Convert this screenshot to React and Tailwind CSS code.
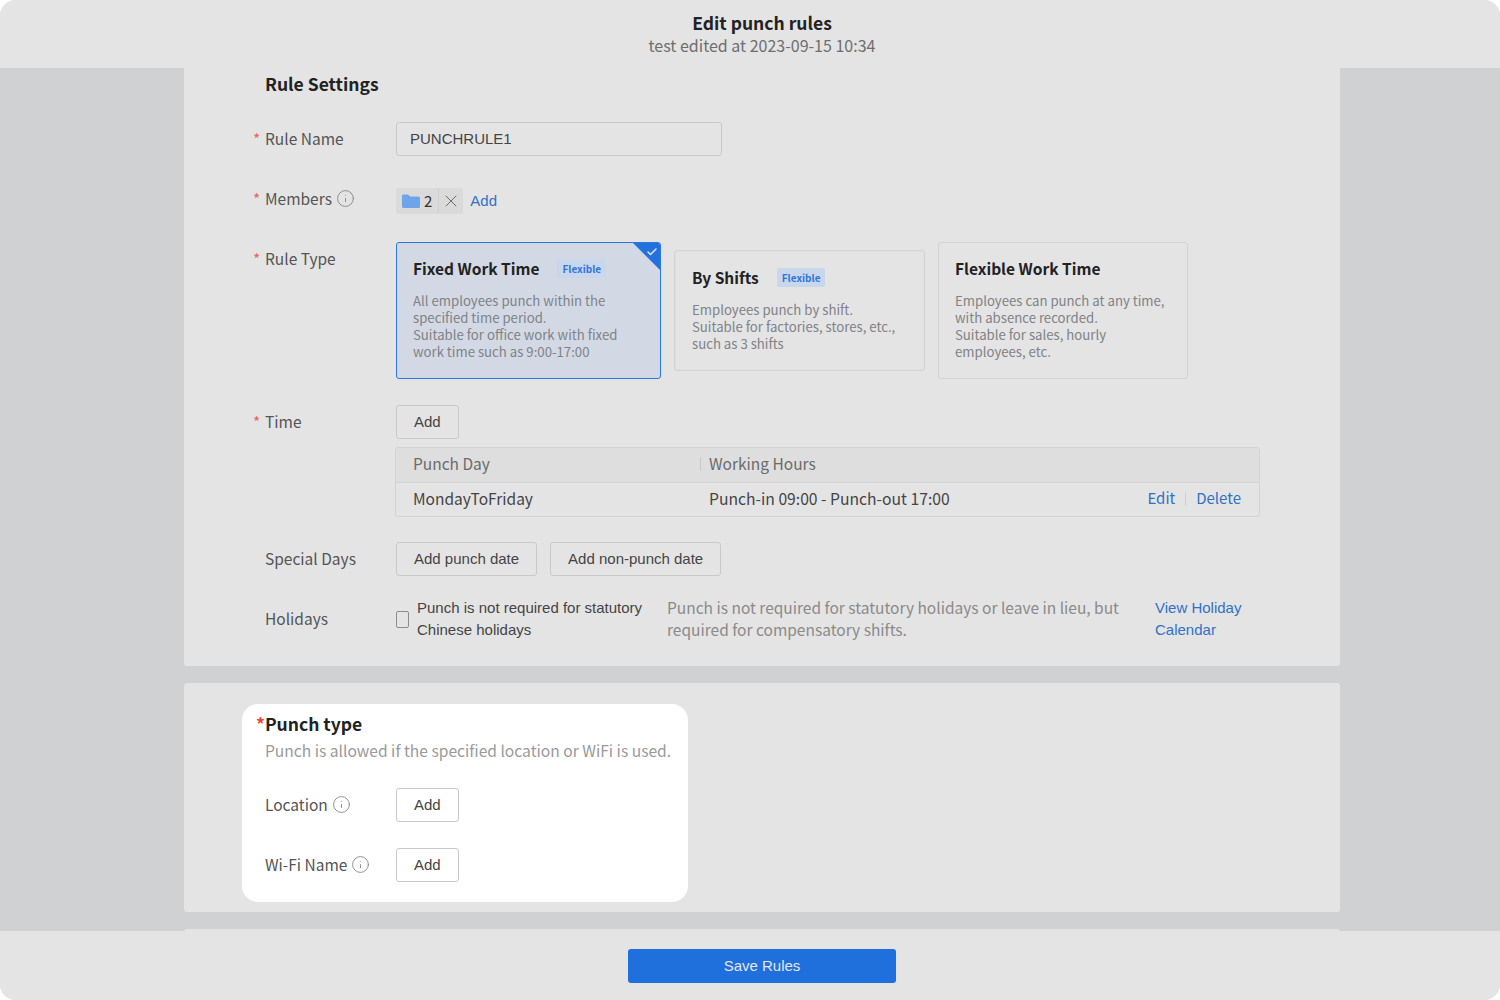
import { Check, Info, X } from "lucide-react";

const UI_FONT = "font-['Noto_Sans_CJK_SC','Noto_Sans',sans-serif]";
const ARIAL = "font-['Liberation_Sans',Arial,sans-serif]";

function Label({ children, required, info }) {
  return (
    <div className="w-[131px] shrink-0 flex items-center text-[15.5px] leading-[20px] text-[#555] -translate-y-[1px]">
      {required && <span className="-ml-[12px] w-[12px] text-[#e2685f]">*</span>}
      <span>{children}</span>
      {info && <Info size={19} strokeWidth={1} className="ml-[4px] text-[#777]" />}
    </div>
  );
}

function Button({ children, className = "" }) {
  return (
    <button className={`h-[34px] px-[17px] border border-[#c9c9c9] rounded-[3px] text-[15px] text-[#444] ${ARIAL} ${className}`}>
      {children}
    </button>
  );
}

function Tag() {
  return (
    <span className="h-[19px] px-[5px] rounded-[2px] bg-[#c8d7ec] text-[#2f76d8] text-[10px] leading-[19px] font-semibold">
      Flexible
    </span>
  );
}

function RuleCard({ title, lines, tag, selected, className }) {
  return (
    <div
      className={`relative overflow-hidden shrink-0 rounded-[3px] border px-[16px] ${
        selected ? "bg-[#d2d9e5] border-[#2a78e0]" : "border-[#d3d3d3]"
      } ${className}`}
    >
      <div className="flex items-center h-[20px]">
        <span className="text-[15.5px] leading-[20px] font-semibold text-[#222]">{title}</span>
        {tag && <span className="flex ml-[18px]"><Tag /></span>}
      </div>
      <div className="mt-[14px] text-[13.2px] leading-[17px] text-[#808286]">
        {lines.map((line) => (
          <div key={line} className="whitespace-nowrap">{line}</div>
        ))}
      </div>
      {selected && (
        <div className="absolute top-0 right-0 w-[27px] h-[27px] bg-[#2272dd] [clip-path:polygon(0_0,100%_0,100%_100%)]">
          <Check size={12} strokeWidth={3} className="absolute top-[3px] right-[2px] text-[#e6e6e6]" />
        </div>
      )}
    </div>
  );
}

export default function App() {
  return (
    <div className="w-[1500px] h-[1000px] bg-white">
      <div className={`w-full h-full flex flex-col overflow-hidden rounded-[16px] bg-[#d0d1d3] ${UI_FONT}`}>
        <header className="h-[68px] shrink-0 bg-[#e4e4e4] flex flex-col items-center pt-[12px] pl-[24px]">
          <div className="text-[17.5px] leading-[22px] font-semibold text-[#222]">Edit punch rules</div>
          <div className="mt-[1px] text-[16px] leading-[21px] text-[#6e6e6e]">test edited at 2023-09-15 10:34</div>
        </header>

        <main className="flex-1 overflow-hidden pl-[184px] pr-[160px] flex flex-col gap-[17px]">
          <section className="h-[598px] shrink-0 bg-[#e4e4e4] rounded-b-[3px] pl-[81px] pt-[4px] flex flex-col">
            <h2 className="text-[17.5px] leading-[24px] font-semibold text-[#222]">Rule Settings</h2>

            <div className="mt-[26px] flex items-center h-[34px]">
              <Label required>Rule Name</Label>
              <div className={`w-[326px] h-[34px] flex items-center px-[13px] border border-[#c9c9c9] rounded-[3px] text-[15px] text-[#444] ${ARIAL}`}>
                PUNCHRULE1
              </div>
            </div>

            <div className="mt-[32px] flex h-[26px]">
              <div className="mt-[1px]"><Label required info>Members</Label></div>
              <div className="flex items-center h-[26px] rounded-[3px] bg-[#dadada] text-[15px] text-[#333]">
                <span className="flex items-center gap-[4px] pl-[6px] pr-[6px] h-full border-r border-[#d0d0d0]">
                  <svg width="18" height="14" viewBox="0 0 18 14">
                    <path d="M0 2a1.500 1.500 0 0 1 1.500-1.500h4.600L8 2.500h8.500A1.500 1.500 0 0 1 18 4v8.500a1.500 1.500 0 0 1-1.500 1.500h-15A1.500 1.500 0 0 1 0 12.500z" fill="#6ea5ea" />
                  </svg>
                  2
                </span>
                <span className="flex items-center justify-center w-[24px]">
                  <X size={20} strokeWidth={1} className="text-[#555]" />
                </span>
              </div>
              <span className={`ml-[7px] text-[15px] leading-[26px] text-[#3271c4] ${ARIAL}`}>Add</span>
            </div>

            <div className="mt-[28px] flex">
              <div className="pt-[7px]"><Label required>Rule Type</Label></div>
              <div className="flex items-center gap-[13px]">
                <RuleCard
                  selected
                  tag
                  className="w-[265px] h-[137px] pt-[15px]"
                  title="Fixed Work Time"
                  lines={["All employees punch within the", "specified time period.", "Suitable for office work with fixed", "work time such as 9:00-17:00"]}
                />
                <RuleCard
                  tag
                  className="w-[251px] h-[121px] pt-[16px] pl-[17px] shadow-[inset_0_0_0_1px_#e0e0e0]"
                  title="By Shifts"
                  lines={["Employees punch by shift.", "Suitable for factories, stores, etc.,", "such as 3 shifts"]}
                />
                <RuleCard
                  className="w-[250px] h-[137px] pt-[15px]"
                  title="Flexible Work Time"
                  lines={["Employees can punch at any time,", "with absence recorded.", "Suitable for sales, hourly", "employees, etc."]}
                />
              </div>
            </div>

            <div className="mt-[26px] flex items-center h-[34px]">
              <Label required>Time</Label>
              <Button>Add</Button>
            </div>

            <div className="mt-[8px] ml-[130px] w-[865px] h-[70px] border border-[#d3d3d3] rounded-[3px] overflow-hidden text-[15.5px]">
              <div className="h-[35px] pb-[2px] flex items-center bg-[#dedede] border-b border-[#d3d3d3] text-[#6b6b6b]">
                <span className="w-[304px] pl-[17px]">Punch Day</span>
                <span className="h-[14px] border-l border-[#c9c9c9] pl-[8px] flex items-center">Working Hours</span>
              </div>
              <div className="h-[34px] pb-[3px] flex items-center text-[#444]">
                <span className="w-[313px] pl-[17px]">MondayToFriday</span>
                <span className="text-[15.7px]">Punch-in 09:00 - Punch-out 17:00</span>
                <span className="ml-auto pr-[18px] flex items-center text-[15px] text-[#3271c4]">
                  Edit
                  <span className="mx-[10px] h-[14px] border-l border-[#cfcfcf]" />
                  Delete
                </span>
              </div>
            </div>

            <div className="mt-[25px] flex items-center h-[34px]">
              <Label>Special Days</Label>
              <div className="flex gap-[13px]">
                <Button>Add punch date</Button>
                <Button>Add non-punch date</Button>
              </div>
            </div>

            <div className="mt-[21px] flex items-center h-[44px]">
              <Label>Holidays</Label>
              <span className="w-[13px] h-[17px] shrink-0 border border-[#8d8d8d] rounded-[2px]" />
              <div className={`ml-[8px] w-[250px] text-[15px] leading-[22px] text-[#444] ${ARIAL}`}>
                Punch is not required for statutory Chinese holidays
              </div>
              <div className="w-[488px] mb-[2px] text-[15.5px] leading-[22px] text-[#8a8a8a]">
                Punch is not required for statutory holidays or leave in lieu, but required for compensatory shifts.
              </div>
              <div className={`w-[100px] text-[15px] leading-[22px] text-[#3271c4] ${ARIAL}`}>
                View Holiday Calendar
              </div>
            </div>
          </section>

          <section className="h-[229px] shrink-0 bg-[#e4e4e4] rounded-[3px] pl-[58px] pt-[21px]">
            <div className="w-[446px] h-[198px] bg-white rounded-[16px] pl-[23px] pt-[9px]">
              <div className="-ml-[9px] text-[17.5px] leading-[22px] font-semibold text-[#222]">
                <span className="text-[#f0443a]">*</span>Punch type
              </div>
              <div className="mt-[5px] text-[15.6px] leading-[21px] text-[#9a9a9a] whitespace-nowrap">
                Punch is allowed if the specified location or WiFi is used.
              </div>
              <div className="mt-[27px] flex items-center h-[34px]">
                <Label info>Location</Label>
                <Button>Add</Button>
              </div>
              <div className="mt-[26px] flex items-center h-[34px]">
                <Label info>Wi-Fi Name</Label>
                <Button>Add</Button>
              </div>
            </div>
          </section>

          <section className="h-[20px] shrink-0 bg-[#e4e4e4] rounded-t-[3px]" />
        </main>

        <footer className="h-[69px] shrink-0 bg-[#e4e4e4] flex items-start justify-center pt-[18px] pl-[24px]">
          <button className={`w-[268px] h-[34px] rounded-[3px] bg-[#1f6fdc] text-[15px] text-[#e6e6e6] ${ARIAL}`}>
            Save Rules
          </button>
        </footer>
      </div>
    </div>
  );
}
